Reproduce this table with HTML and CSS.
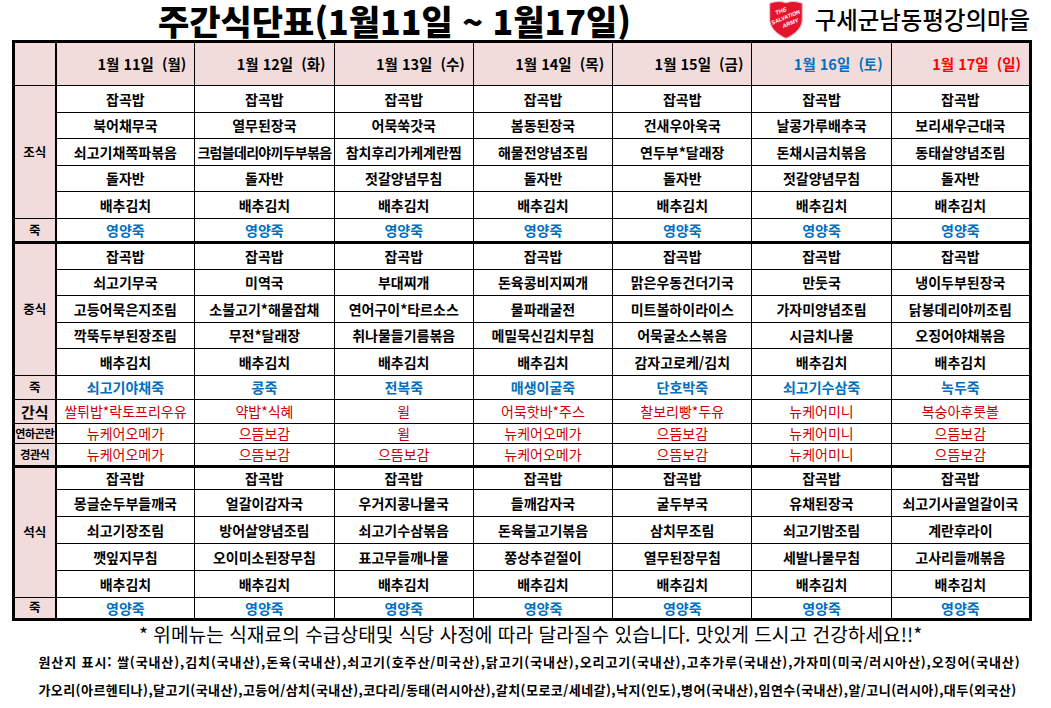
FILE: index.html
```html
<!DOCTYPE html>
<html lang="ko">
<head>
<meta charset="utf-8">
<title>주간식단표</title>
<link rel="stylesheet" href="styles.css">
</head>
<body>
<header class="top">
  <h1 class="title">주간식단표(1월11일 ~ 1월17일)</h1>
  <div class="org">
    <svg class="logo" viewBox="0 0 34 38" width="36" height="40" aria-label="The Salvation Army">
      <path d="M1.5 4 Q9 1 17 3.5 Q25 1 32.5 4 L32.5 19 Q32.5 30.5 17 37.5 Q1.5 30.5 1.5 19 Z" fill="#e3142c" stroke="#f4c2c8" stroke-width="1"/>
      <g transform="rotate(-22 17 18)" fill="#fff" font-family="Liberation Sans, sans-serif" font-weight="700" font-style="italic" text-anchor="middle">
        <text x="15" y="12" font-size="5.5">THE</text>
        <text x="17" y="19" font-size="5.2">SALVATION</text>
        <text x="19" y="26" font-size="5.5">ARMY</text>
      </g>
    </svg>
    <span class="org-name">구세군남동평강의마을</span>
  </div>
</header>

<table class="menu">
  <colgroup><col class="c-label"><col><col><col><col><col><col><col></colgroup>
  <thead>
    <tr class="r-hdr">
      <th class="lab"></th>
      <th>1월 11일&nbsp;&nbsp;(월)</th>
      <th>1월 12일&nbsp;&nbsp;(화)</th>
      <th>1월 13일&nbsp;&nbsp;(수)</th>
      <th>1월 14일&nbsp;&nbsp;(목)</th>
      <th>1월 15일&nbsp;&nbsp;(금)</th>
      <th class="sat">1월 16일&nbsp;&nbsp;(토)</th>
      <th class="sun">1월 17일&nbsp;&nbsp;(일)</th>
    </tr>
  </thead>
  <tbody>
    <tr class="r">
      <td class="lab" rowspan="5">조식</td>
      <td>잡곡밥</td><td>잡곡밥</td><td>잡곡밥</td><td>잡곡밥</td><td>잡곡밥</td><td>잡곡밥</td><td>잡곡밥</td>
    </tr>
    <tr class="r">
      <td>북어채무국</td><td>열무된장국</td><td>어묵쑥갓국</td><td>봄동된장국</td><td>건새우아욱국</td><td>날콩가루배추국</td><td>보리새우근대국</td>
    </tr>
    <tr class="r">
      <td>쇠고기채쪽파볶음</td><td class="tight">크럼블데리야끼두부볶음</td><td>참치후리가케계란찜</td><td>해물전양념조림</td><td>연두부*달래장</td><td>돈채시금치볶음</td><td>동태살양념조림</td>
    </tr>
    <tr class="r">
      <td>돌자반</td><td>돌자반</td><td>젓갈양념무침</td><td>돌자반</td><td>돌자반</td><td>젓갈양념무침</td><td>돌자반</td>
    </tr>
    <tr class="r">
      <td>배추김치</td><td>배추김치</td><td>배추김치</td><td>배추김치</td><td>배추김치</td><td>배추김치</td><td>배추김치</td>
    </tr>
    <tr class="r-juk blue">
      <td class="lab">죽</td>
      <td>영양죽</td><td>영양죽</td><td>영양죽</td><td>영양죽</td><td>영양죽</td><td>영양죽</td><td>영양죽</td>
    </tr>

    <tr class="r group">
      <td class="lab" rowspan="5">중식</td>
      <td>잡곡밥</td><td>잡곡밥</td><td>잡곡밥</td><td>잡곡밥</td><td>잡곡밥</td><td>잡곡밥</td><td>잡곡밥</td>
    </tr>
    <tr class="r">
      <td>쇠고기무국</td><td>미역국</td><td>부대찌개</td><td>돈육콩비지찌개</td><td>맑은우동건더기국</td><td>만둣국</td><td>냉이두부된장국</td>
    </tr>
    <tr class="r">
      <td>고등어묵은지조림</td><td>소불고기*해물잡채</td><td>연어구이*타르소스</td><td>물파래굴전</td><td>미트볼하이라이스</td><td>가자미양념조림</td><td>닭봉데리야끼조림</td>
    </tr>
    <tr class="r">
      <td>깍뚝두부된장조림</td><td>무전*달래장</td><td>취나물들기름볶음</td><td>메밀묵신김치무침</td><td>어묵굴소스볶음</td><td>시금치나물</td><td>오징어야채볶음</td>
    </tr>
    <tr class="r">
      <td>배추김치</td><td>배추김치</td><td>배추김치</td><td>배추김치</td><td>감자고로케/김치</td><td>배추김치</td><td>배추김치</td>
    </tr>
    <tr class="r-juk blue">
      <td class="lab">죽</td>
      <td>쇠고기야채죽</td><td>콩죽</td><td>전복죽</td><td>매생이굴죽</td><td>단호박죽</td><td>쇠고기수삼죽</td><td>녹두죽</td>
    </tr>
    <tr class="r-snack red">
      <td class="lab lab-big">간식</td>
      <td>쌀튀밥*락토프리우유</td><td>약밥*식혜</td><td>윌</td><td>어묵핫바*주스</td><td>찰보리빵*두유</td><td>뉴케어미니</td><td>복숭아후룻볼</td>
    </tr>
    <tr class="r-diet red">
      <td class="lab lab-small">연하곤란</td>
      <td>뉴케어오메가</td><td>으뜸보감</td><td>윌</td><td>뉴케어오메가</td><td>으뜸보감</td><td>뉴케어미니</td><td>으뜸보감</td>
    </tr>
    <tr class="r-tube red">
      <td class="lab lab-small">경관식</td>
      <td>뉴케어오메가</td><td>으뜸보감</td><td>으뜸보감</td><td>뉴케어오메가</td><td>으뜸보감</td><td>뉴케어미니</td><td>으뜸보감</td>
    </tr>

    <tr class="r-top group">
      <td class="lab" rowspan="5">석식</td>
      <td>잡곡밥</td><td>잡곡밥</td><td>잡곡밥</td><td>잡곡밥</td><td>잡곡밥</td><td>잡곡밥</td><td>잡곡밥</td>
    </tr>
    <tr class="r2">
      <td>몽글순두부들깨국</td><td>얼갈이감자국</td><td>우거지콩나물국</td><td>들깨감자국</td><td>굴두부국</td><td>유채된장국</td><td>쇠고기사골얼갈이국</td>
    </tr>
    <tr class="r2">
      <td>쇠고기장조림</td><td>방어살양념조림</td><td>쇠고기수삼볶음</td><td>돈육불고기볶음</td><td>삼치무조림</td><td>쇠고기밤조림</td><td>계란후라이</td>
    </tr>
    <tr class="r2">
      <td>깻잎지무침</td><td>오이미소된장무침</td><td>표고무들깨나물</td><td>쫑상추겉절이</td><td>열무된장무침</td><td>세발나물무침</td><td>고사리들깨볶음</td>
    </tr>
    <tr class="r2">
      <td>배추김치</td><td>배추김치</td><td>배추김치</td><td>배추김치</td><td>배추김치</td><td>배추김치</td><td>배추김치</td>
    </tr>
    <tr class="r-juk2 blue">
      <td class="lab">죽</td>
      <td>영양죽</td><td>영양죽</td><td>영양죽</td><td>영양죽</td><td>영양죽</td><td>영양죽</td><td>영양죽</td>
    </tr>
  </tbody>
</table>

<footer class="foot">
  <p class="note">* 위메뉴는 식재료의 수급상태및 식당 사정에 따라 달라질수 있습니다. 맛있게 드시고 건강하세요!!*</p>
  <p class="origin origin-a">원산지 표시: 쌀(국내산),김치(국내산),돈육(국내산),쇠고기(호주산/미국산),닭고기(국내산),오리고기(국내산),고추가루(국내산),가자미(미국/러시아산),오징어(국내산)</p>
  <p class="origin origin-b">가오리(아르헨티나),달고기(국내산),고등어/삼치(국내산),코다리/동태(러시아산),갈치(모로코/세네갈),낙지(인도),병어(국내산),임연수(국내산),알/고니(러시아),대두(외국산)</p>
</footer>
</body>
</html>
```

FILE: styles.css
```css
* { box-sizing: border-box; }

body {
  margin: 0;
  width: 1051px;
  background: #fff;
  color: #000;
  font-family: "Noto Sans CJK KR", "Noto Sans", sans-serif;
}

.top {
  display: flex;
  align-items: flex-end;
  height: 40px;
  padding-left: 158px;
  padding-right: 21px;
}

.title {
  margin: 0;
  font-size: 34px;
  font-weight: 900;
  line-height: 38px;
  white-space: nowrap;
}

.org {
  margin-left: auto;
  display: flex;
  align-items: center;
  gap: 11px;
  padding-bottom: 1px;
}

.logo { display: block; }

.org-name {
  font-size: 23.4px;
  font-weight: 500;
  line-height: 32px;
}

.menu {
  margin-left: 12px;
  width: 1020px;
  border-collapse: collapse;
  table-layout: fixed;
  border: 3px solid #000;
}

.c-label { width: 42px; }

.menu th,
.menu td {
  border: 1px solid #000;
  padding: 0;
  text-align: center;
  vertical-align: middle;
  white-space: nowrap;
  line-height: 1;
  font-size: 14px;
  font-weight: 700;
}

.menu thead th {
  background: #f2dcdb;
  text-align: right;
  padding-right: 8px;
  font-size: 14.5px;
}

.menu .lab {
  background: #f2dcdb;
  border-right: 2px solid #000;
  font-size: 12.5px;
  text-align: center;
  padding: 0;
}

.menu .lab-big { font-size: 15px; }
.menu .lab-small { font-size: 11px; letter-spacing: -0.4px; }

.menu .sat { color: #0070c0; }
.menu .sun { color: #ff0000; }

.r-hdr { height: 44px; }
.r { height: 26.5px; }
.r2 { height: 27px; }
.r-top { height: 23px; }
.r-juk { height: 24.5px; }
.r-juk2 { height: 22px; }
.r-snack { height: 23.5px; }
.r-diet { height: 20px; }
.r-tube { height: 23px; }

.group td { border-top: 3px solid #000; }

.blue td { color: #0070c0; }
.blue td.lab { color: #000; }
.red td { color: #cc0000; font-weight: 400; }
.red td.lab { color: #000; font-weight: 700; }

.menu td.tight { letter-spacing: -0.7px; }

.foot { text-align: center; }

.note {
  margin: 0;
  font-size: 19.2px;
  line-height: 27px;
  padding-left: 10px;
}

.origin {
  margin: 0;
  font-size: 13px;
  font-weight: 700;
  line-height: 28px;
  white-space: nowrap;
}

.origin-a { letter-spacing: 0.9px; padding-left: 8px; }
.origin-b { letter-spacing: 0.45px; padding-left: 4px; }
```
